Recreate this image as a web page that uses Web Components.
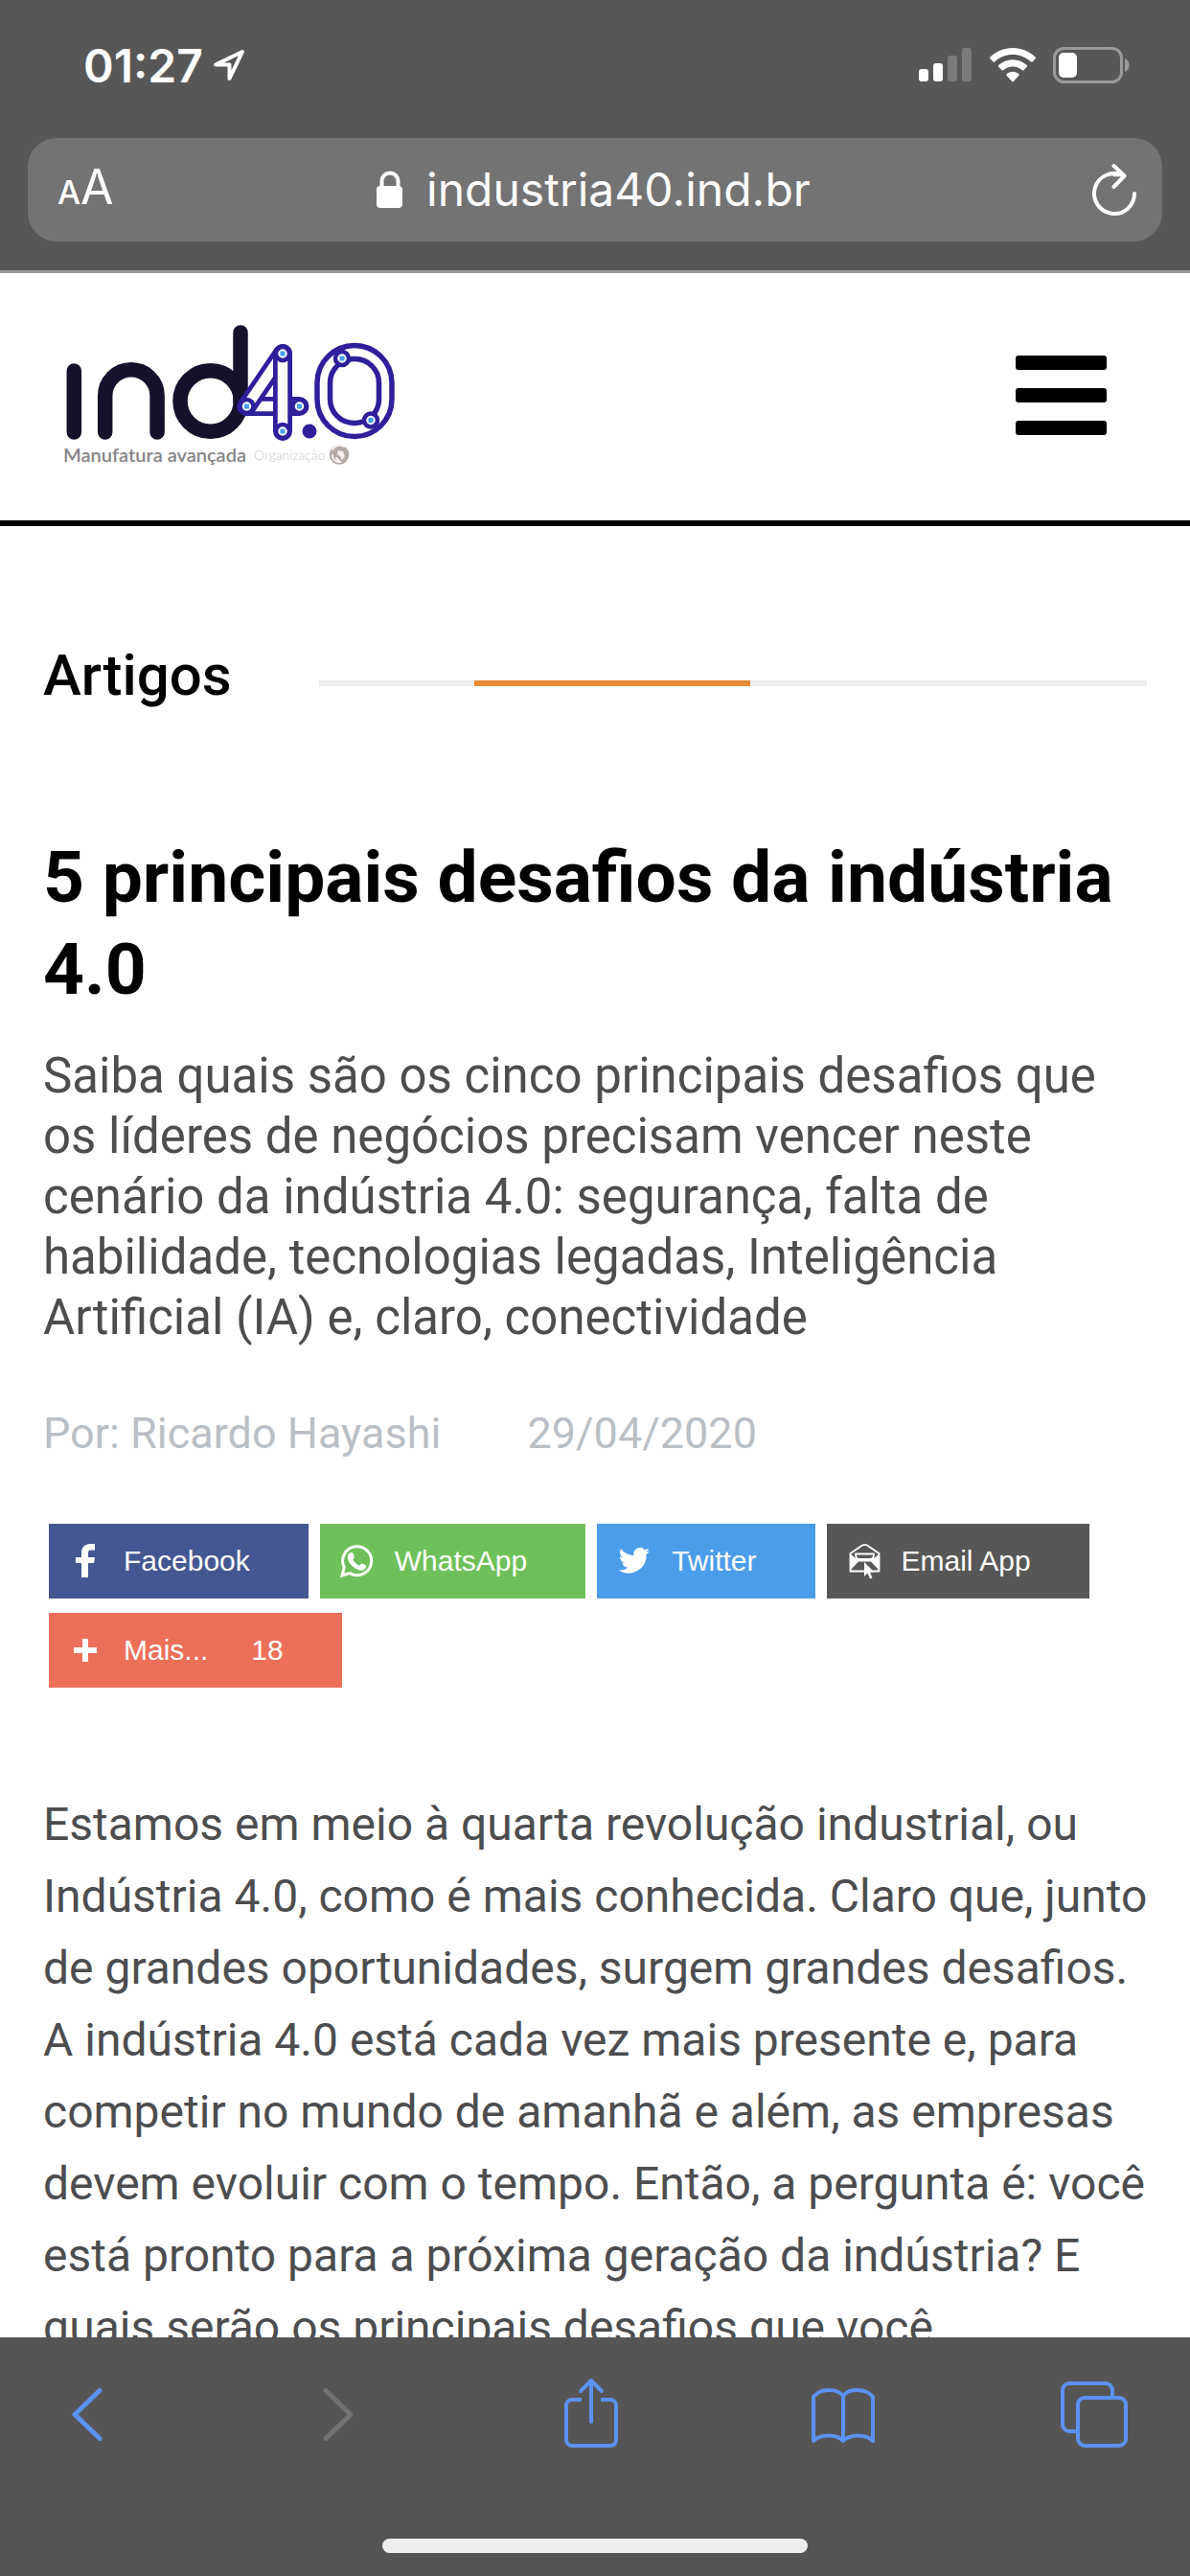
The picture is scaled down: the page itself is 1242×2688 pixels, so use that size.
<!DOCTYPE html>
<html lang="pt-BR">
<head>
<meta charset="utf-8">
<meta name="viewport" content="width=device-width, initial-scale=1">
<title>5 principais desafios da indústria 4.0</title>
<style>
  html, body { margin: 0; height: 100%; }
  body { background: #fff; font-family: Roboto, "Liberation Sans", sans-serif; }
</style>
</head>
<body>
<app-screen>
  <status-bar slot="top" time="01:27"></status-bar>
  <address-bar slot="top">industria40.ind.br</address-bar>
  <site-header></site-header>
  <article-page>
    <section-title slot="section">Artigos</section-title>
    <span slot="title">5 principais desafios da indústria 4.0</span>
    <span slot="lead">Saiba quais são os cinco principais desafios que os líderes de negócios precisam vencer neste cenário da indústria 4.0: segurança, falta de habilidade, tecnologias legadas, Inteligência Artificial (IA) e, claro, conectividade</span>
    <span slot="author">Por: Ricardo Hayashi</span>
    <time slot="date" datetime="2020-04-29">29/04/2020</time>
    <share-button slot="share" kind="facebook">Facebook</share-button>
    <share-button slot="share" kind="whatsapp">WhatsApp</share-button>
    <share-button slot="share" kind="twitter">Twitter</share-button>
    <share-button slot="share" kind="email">Email App</share-button>
    <share-button slot="share" kind="more" count="18">Mais...</share-button>
    <p>Estamos em meio à quarta revolução industrial, ou Indústria 4.0, como é mais conhecida. Claro que, junto de grandes oportunidades, surgem grandes desafios. A indústria 4.0 está cada vez mais presente e, para competir no mundo de amanhã e além, as empresas devem evoluir com o tempo. Então, a pergunta é: você está pronto para a próxima geração da indústria? E quais serão os principais desafios que você</p>
  </article-page>
  <browser-toolbar slot="bottom"></browser-toolbar>
</app-screen>

<script>
class Base extends HTMLElement {
  connectedCallback() {
    if (this.shadowRoot) return;
    this.attachShadow({ mode: 'open' }).innerHTML =
      `<style>*{box-sizing:border-box}button{font:inherit;color:inherit;background:none;border:0;padding:0;margin:0;cursor:pointer}svg{display:block;flex:none}</style>` + this.render();
  }
}

customElements.define('app-screen', class extends Base {
  render() {
    return `<style>
      :host{display:flex;flex-direction:column;height:100vh}
      header{flex:none;background:#575757;border-bottom:3px solid #9d9d9d;padding-bottom:30px}
      main{flex:1;min-height:0;overflow:hidden}
      footer{flex:none}
    </style>
    <header><slot name="top"></slot></header>
    <main><slot></slot></main>
    <footer><slot name="bottom"></slot></footer>`;
  }
});

customElements.define('status-bar', class extends Base {
  render() {
    return `<style>
      :host{display:flex;align-items:center;justify-content:space-between;height:136px;padding:0 63px 0 87px;color:#fff;font-family:Inter,sans-serif}
      div{display:flex;align-items:center}
      .time{gap:10px;font-size:48px;font-weight:600}
      .state{gap:18px}
    </style>
    <div class="time"><span>${this.getAttribute('time')}</span>
      <svg width="34" height="34" viewBox="0 0 34 34" fill="none" stroke="#fff" stroke-width="4" stroke-linejoin="round"><path d="M31 3 3 16.500H17.500V31Z"/></svg></div>
    <div class="state">
      <svg width="56" height="36" viewBox="0 0 56 36" fill="#fff"><rect y="22" width="10" height="13" rx="3"/><rect x="15" y="16" width="10" height="19" rx="3"/><g fill="#7b7b7b"><rect x="30" y="8" width="10" height="27" rx="3"/><rect x="45" width="10" height="35" rx="3"/></g></svg>
      <svg width="48" height="36" viewBox="0 0 48 36" fill="#fff"><path d="M24 0C33 0 41.500 3.600 47.600 9.600c.5.500.5 1.200 0 1.700l-3.100 3.100c-.5.500-1.100.5-1.600 0C37.800 9.700 31.200 7.100 24 7.100S10.200 9.700 5.100 14.400c-.5.500-1.100.5-1.600 0L.4 11.300c-.5-.5-.5-1.200 0-1.700C6.500 3.600 15 0 24 0Z"/><path d="M24 12.300c5.700 0 10.900 2.200 14.800 5.800.5.500.5 1.200 0 1.700l-3.400 3.400c-.4.400-1.100.5-1.600 0-2.600-2.300-6-3.800-9.800-3.800s-7.200 1.500-9.800 3.800c-.5.500-1.200.4-1.600 0l-3.400-3.400c-.5-.5-.5-1.200 0-1.700 3.900-3.600 9.100-5.800 14.800-5.800Z"/><path d="M24 24.800c2.500 0 4.700.9 6.400 2.400.5.500.5 1.100 0 1.600l-5.600 6.300c-.5.500-1.100.5-1.600 0l-5.600-6.300c-.5-.5-.5-1.100 0-1.600 1.700-1.500 3.900-2.400 6.400-2.400Z"/></svg>
      <svg width="80" height="38" viewBox="0 0 80 38"><rect x="1.500" y="1.500" width="70" height="35" rx="10" fill="none" stroke="#9a9a9a" stroke-width="3"/><rect x="6" y="6" width="19" height="26" rx="5" fill="#fff"/><path d="M75 12c3 1 4.500 4 4.500 7s-1.500 6-4.500 7Z" fill="#9a9a9a"/></svg>
    </div>`;
  }
});

customElements.define('address-bar', class extends Base {
  render() {
    return `<style>
      :host{display:flex;align-items:center;justify-content:space-between;height:108px;margin:8px 29px 0;padding:0 26px 0 31px;border-radius:30px;background:#737373;color:#fff;font-family:Inter,sans-serif}
      .size{width:60px;display:flex;align-items:baseline;font-size:50px;line-height:64px}
      .size small{font-size:34px;font-weight:500}
      .url{display:flex;align-items:center;gap:24px;font-size:48px;line-height:60px}
      .reload{width:68px;display:flex;justify-content:flex-end}
    </style>
    <button class="size" aria-label="Tamanho do texto"><small>A</small><span>A</span></button>
    <button class="url"><svg width="28" height="40" viewBox="0 0 28 40"><path d="M5.500 19V11a8.500 8.500 0 0 1 17 0v8" fill="none" stroke="#fff" stroke-width="4"/><rect y="16" width="27" height="23" rx="4" fill="#fff"/></svg><span><slot></slot></span></button>
    <button class="reload" aria-label="Recarregar"><svg width="48" height="56" viewBox="0 0 48 56" fill="none" stroke="#fff" stroke-width="4" stroke-linecap="round" stroke-linejoin="round"><path d="M45 32A21 21 0 1 1 33 13M23.500 3 34.500 13.500 23.500 25M24 12.300h9"/></svg></button>`;
  }
});

customElements.define('ind-logo', class extends Base {
  render() {
    const node = (x, y) => `<circle cx="${x}" cy="${y}" r="7" fill="#fff" stroke="#2e1f9b" stroke-width="4.500"/><rect x="${x - 2.5}" y="${y - 2.5}" width="5" height="5" fill="#45a0ee"/>`;
    const bar = d => `<path d="${d}" stroke="#2e1f9b" stroke-width="20"/><path d="${d}" stroke="#fff" stroke-width="10.500"/>`;
    return `<style>:host{display:block}</style>
    <svg width="360" height="156" viewBox="60 335 360 156" fill="none" stroke-linecap="round" role="img" aria-label="ind4.0">
      <g stroke="#15102c" stroke-width="15.500"><path d="M77.300 387v64M109.700 451v-38a27.200 27.200 0 0 1 54.400 0v38M251 347v72"/><circle cx="219.700" cy="418.500" r="31.700"/></g>
      ${bar('M257.500 424H312.500')}${bar('M295 369 257.500 424')}${bar('M295 369V450')}
      ${node(295, 369)}${node(257.5, 424)}${node(312.5, 424)}${node(295, 450)}
      <circle cx="323" cy="450" r="7.500" fill="#2e1f9b"/>
      <rect x="331" y="360.500" width="78" height="95" rx="39" stroke="#2e1f9b" stroke-width="5.500"/>
      <rect x="344.500" y="374.500" width="51" height="67" rx="25" stroke="#2e1f9b" stroke-width="5.500"/>
      ${node(357, 374)}${node(387, 438.5)}
      <text x="66" y="482" font-family="Lato" font-size="20" font-weight="600" fill="#858585">Manufatura avançada</text>
      <text x="265" y="480" font-family="Lato" font-size="14" font-weight="300" fill="#c8c8c8">Organização</text>
      <circle cx="354" cy="474.500" r="10.300" fill="#b3a9a4"/><path d="M347 469a9 9 0 0 1 12-3M347 475a7 7 0 0 0 8 7l-4-4" stroke="#f4f1ef" stroke-width="2"/><path d="M353 470l5 1 2 5-3 4-2-4-3-2Z" fill="#f4f1ef"/>
    </svg>`;
  }
});

customElements.define('site-header', class extends Base {
  render() {
    return `<style>
      :host{display:flex;align-items:flex-start;justify-content:space-between;height:264px;padding:50px 87px 0 60px;border-bottom:6px solid #000;background:#fff;box-sizing:border-box}
      button{margin-top:36px}
    </style>
    <a href="#" aria-label="Página inicial"><ind-logo></ind-logo></a>
    <button aria-label="Menu"><svg width="95" height="83" viewBox="0 0 95 83"><rect width="95" height="15" rx="3"/><rect y="34" width="95" height="15" rx="3"/><rect y="68" width="95" height="15" rx="3"/></svg></button>`;
  }
});

customElements.define('section-title', class extends Base {
  render() {
    return `<style>
      :host{display:grid;grid-template-columns:1fr 3fr;align-items:center}
      h2{margin:0;font-size:60px;font-weight:500;line-height:72px;color:#000}
      .rule{height:6px;margin-top:16px;background:#ededed;display:grid;grid-template-columns:9fr 16fr 23fr}
      .rule i{grid-column:2;background:#e88b36}
    </style><h2><slot></slot></h2><div class="rule"><i></i></div>`;
  }
});

customElements.define('share-button', class extends Base {
  render() {
    const kinds = {
      facebook: ['#435892', '<path fill="#fff" d="M14 36V21H8v-6h6v-4.500C14 4.500 17.500 1 23.500 1H28v6.500h-4c-2.500 0-3 1-3 3V15h7l-1 6h-6v15Z"/>'],
      whatsapp: ['#6fc05a', '<path fill="none" stroke="#fff" stroke-width="3" d="M3 34l2.300-8.500A15 15 0 1 1 11 31.600Z"/><path fill="#fff" d="M12.500 10c.8 0 1.500-.1 2 1.100l1.300 3.200c.2.700-.2 1.500-1.500 2.900 1.700 3.300 4 5.200 7.200 6.500 1.400-1.700 1.900-2.400 2.700-2.100l3.800 1.900c.5.600-.1 3.100-1.500 4.100-2.800 2-6.400 1-10.300-1.400-3.700-2.400-6-5.600-7.100-8.700-.9-3.200.7-7.500 3.400-7.500Z"/>'],
      twitter: ['#4b9de9', '<path fill="#fff" d="M35 8.200a13 13 0 0 1-3.800 1.100 6.600 6.600 0 0 0 2.900-3.700 13 13 0 0 1-4.200 1.600 6.600 6.600 0 0 0-11.300 6A18.800 18.800 0 0 1 5 6.300a6.600 6.600 0 0 0 2 8.900 6.600 6.600 0 0 1-3-.8c0 3.200 2.200 5.900 5.300 6.600a6.600 6.600 0 0 1-3 .1 6.600 6.600 0 0 0 6.200 4.600A13.300 13.300 0 0 1 2.700 28.400 18.800 18.800 0 0 0 31.700 11.700 13.400 13.400 0 0 0 35 8.200Z"/>'],
      email: ['#575757', '<path fill="none" stroke="#fff" stroke-width="1.800" stroke-linejoin="round" d="M4.500 11 17 2.500q2.500-1.300 5 0L34.500 11v18.500h-30Z"/><path fill="#fff" d="M5 12l5 4h19l5-4v16l-8-8.500H13L5 28Z"/><path fill="#575757" stroke="#fff" stroke-width="1.800" d="M10 11.500h19q0 5.500-4 5.500H14q-4 0-4-5.500Z"/><path fill="#fff" d="M19 20v15l3.500-3.500 2.500 6 2.500-1-2.500-6h4.500Z"/>'],
      more: ['#ec6f5a', '<path fill="#fff" d="M15 7h6v9h9v6h-9v9h-6v-9H6v-6h9Z"/>']
    };
    const [color, icon] = kinds[this.getAttribute('kind')];
    const count = this.getAttribute('count');
    return `<style>
      :host{display:block}
      button{display:flex;align-items:center;gap:22px;height:78px;padding:0 61px 0 20px;background:${color};color:#fff;font-family:"Liberation Sans",Arial,sans-serif;font-size:30px;line-height:36px}
      b{font-weight:400;margin-left:23px}
    </style><button><svg width="36" height="38" viewBox="0 0 36 38">${icon}</svg><span><slot></slot></span>${count ? `<b>${count}</b>` : ''}</button>`;
  }
});

customElements.define('article-page', class extends Base {
  render() {
    return `<style>
      :host{display:block;padding:120px 45px 0}
      h1{margin:126px 0 0;font-size:75px;line-height:96px;font-weight:700;color:#000}
      .lead{margin:32px 0 0;font-size:51px;line-height:63px;color:#4c4d4f}
      .meta{display:flex;gap:90px;margin-top:60px;font-size:45px;line-height:60px;color:#b9bfc5}
      .share{display:flex;flex-wrap:wrap;gap:15px 12px;margin-top:64px;padding:0 6px}
      .body{margin:105px -6px 0 0;font-size:48px;line-height:75px;color:#4c4d4f}
      ::slotted(p){margin:0}
    </style>
    <slot name="section"></slot>
    <article>
      <h1><slot name="title"></slot></h1>
      <p class="lead"><slot name="lead"></slot></p>
      <div class="meta"><slot name="author"></slot><slot name="date"></slot></div>
      <div class="share"><slot name="share"></slot></div>
      <div class="body"><slot></slot></div>
    </article>`;
  }
});

customElements.define('browser-toolbar', class extends Base {
  render() {
    const icon = (label, body, extra = '') => `<button aria-label="${label}" ${extra}><svg width="78" height="78" viewBox="0 0 78 78">${body}</svg></button>`;
    return `<style>
      :host{display:flex;flex-direction:column;justify-content:space-between;height:249px;padding:41px 0 24px;background:#555;box-sizing:border-box}
      nav{display:flex;justify-content:space-between;padding:0 60px 0 52px}
      svg{fill:none;stroke:#5b92f3;stroke-width:4;stroke-linecap:round;stroke-linejoin:round}
      :disabled svg{stroke:#727272}
      .home{align-self:center;width:444px;height:15px;border-radius:8px;background:#eee}
    </style>
    <nav>
      ${icon('Voltar', '<path stroke-width="5" d="M52 14.500 26 39.500 52 64.500"/>')}
      ${icon('Avançar', '<path stroke-width="5" d="M25 14.500 51 39.500 25 64.500"/>', 'disabled')}
      ${icon('Compartilhar', '<path stroke-linecap="butt" d="M29 24H19a6 6 0 0 0-6 6v36a6 6 0 0 0 6 6h40a6 6 0 0 0 6-6V30a6 6 0 0 0-6-6H49"/><path d="M39 47V4M28 15 39 4l11 11"/>')}
      ${icon('Favoritos', '<path d="M39 20C35 15 30 14 24 14S12 16 8 21V67C12 63 17 61.500 24 61.500S35 63 39 67C43 63 48 61.500 54 61.500S66 63 70 67V21C66 16 61 14 54 14S43 15 39 20V67"/>')}
      ${icon('Abas', '<rect x="21" y="22" width="50" height="50" rx="7"/><path d="M57 22V14a7 7 0 0 0-7-7H12a7 7 0 0 0-7 7V50a7 7 0 0 0 7 7h9"/>')}
    </nav>
    <div class="home"></div>`;
  }
});
</script>
</body>
</html>
